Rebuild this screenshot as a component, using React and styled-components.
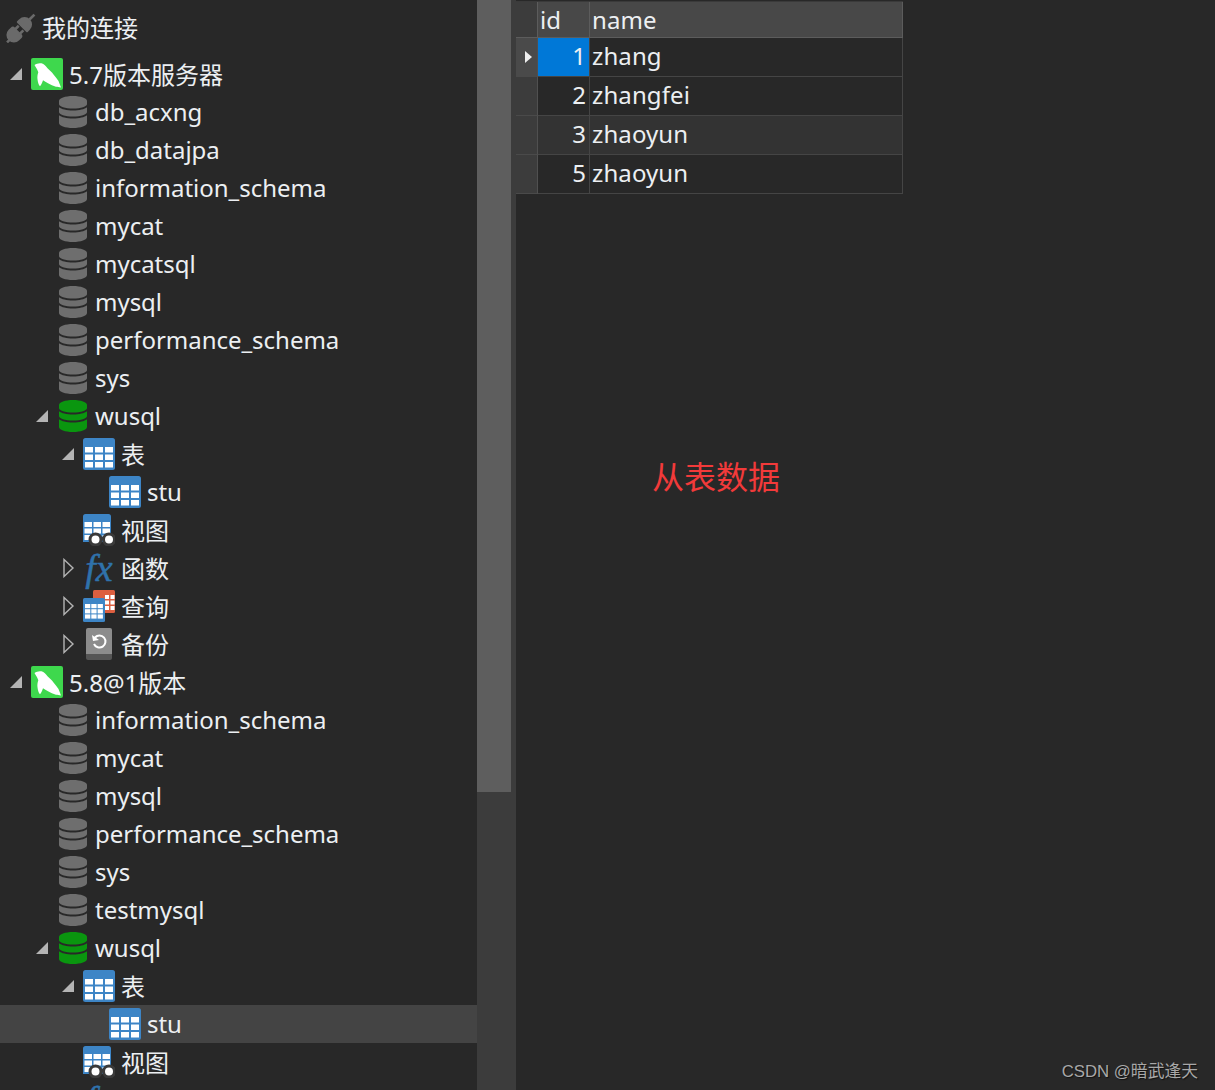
import React from "react";
import styled, { createGlobalStyle } from "styled-components";

const Global = createGlobalStyle`
  html, body { margin: 0; padding: 0; height: 100%; overflow: hidden; background: #282828; }
  #root { height: 100%; }
`;

const FONT = `"Noto Sans", "Noto Sans CJK SC", sans-serif`;

const Page = styled.div`
  display: flex;
  width: 1215px;
  height: 1090px;
  overflow: hidden;
  position: relative;
  background: #282828;
  color: #eceff2;
  font-family: ${FONT};
`;

const Sidebar = styled.div`
  width: 477px;
  flex: none;
  overflow: hidden;
`;

const Header = styled.div`
  height: 55px;
  box-sizing: border-box;
  padding: 8px 0 7px 6px;
  display: flex;
  align-items: center;
  gap: 6px;
  font-size: 24px;
`;

const HeaderLabel = styled.span`
  margin-top: -3px;
`;

const Row = styled.div`
  height: 38px;
  display: flex;
  align-items: center;
  padding-left: ${({ $level }) => $level * 26 + 9}px;
  background: ${({ $selected }) => ($selected ? "#444444" : "transparent")};
  font-size: 24px;
  white-space: nowrap;
`;

const Label = styled.span`
  margin-top: -2px;
  letter-spacing: ${({ $latin }) => ($latin ? "-0.02px" : "0")};
`;

const CaretSlot = styled.span`
  width: 22px;
  height: 38px;
  flex: none;
  display: flex;
  align-items: center;
`;

const IconSlot = styled.span`
  width: 32px;
  height: 38px;
  flex: none;
  display: flex;
  align-items: center;
  justify-content: center;
  margin-right: 6px;
`;

const FxGlyph = styled.span`
  font-family: "Liberation Serif", serif;
  font-style: italic;
  font-weight: 400;
  font-size: 38px;
  line-height: 32px;
  color: #2f72ab;
  -webkit-text-stroke: 0.5px #2f72ab;
`;

const Scroll = styled.div`
  width: 39px;
  flex: none;
  background: #3c3c3c;
`;

const Thumb = styled.div`
  width: 34px;
  height: 792px;
  background: #5e5e5e;
`;

const Main = styled.div`
  flex: 1;
  min-width: 0;
  padding-top: 1px;
`;

const Grid = styled.div`
  width: 387px;
  border-top: 1px solid #3a3a3a;
  display: grid;
  grid-template-columns: 22px 52px 313px;
  grid-template-rows: 36px repeat(4, 39px);
  font-size: 24px;
  letter-spacing: 0.1px;
`;

const HeadCell = styled.div`
  box-sizing: border-box;
  padding: 0 0 0 ${({ $pad }) => $pad || 0}px;
  display: flex;
  align-items: center;
  background: ${({ $blank }) => ($blank ? "#3c3c3c" : "#484848")};
  border-right: 1px solid #5c5c5c;
  border-bottom: 1px solid #5c5c5c;
`;

const Marker = styled.div`
  background: ${({ $active }) => ($active ? "#4a4a4a" : "#3c3c3c")};
  border-right: 1px solid #505050;
  border-bottom: 1px solid #4a4a4a;
  display: flex;
  align-items: center;
  justify-content: flex-end;
  padding-right: 5px;
  box-sizing: border-box;
`;

const Cell = styled.div`
  box-sizing: border-box;
  display: flex;
  align-items: center;
  justify-content: ${({ $num }) => ($num ? "flex-end" : "flex-start")};
  padding: ${({ $num }) => ($num ? "0 3px 4px 0" : "0 0 4px 2px")};
  background: ${({ $active, $alt }) => ($active ? "#0078d7" : $alt ? "#333333" : "#282828")};
  border-right: 1px solid #454545;
  border-bottom: 1px solid #454545;
`;

const Note = styled.div`
  margin: 261px 0 0 136px;
  color: #f23a3a;
  font-size: 32px;
  line-height: 40px;
  font-family: "Noto Sans CJK SC", sans-serif;
`;

const Watermark = styled.div`
  position: absolute;
  right: 17px;
  bottom: 8px;
  color: #a8a8a8;
  font-size: 16.8px;
  font-family: "Liberation Sans", "Noto Sans CJK SC", sans-serif;
  text-shadow: 1px 1px 1px #111;
`;

const Caret = ({ open }) =>
  open ? (
    <svg width="14" height="14" viewBox="0 0 14 14"><path d="M13 1v12H1z" fill="#b4b4b4" /></svg>
  ) : (
    <svg width="14" height="20" viewBox="0 0 14 20"><path d="M3 1.500 12 10 3 18.500z" fill="none" stroke="#b4b4b4" strokeWidth="1.400" /></svg>
  );

const Plug = () => (
  <svg width="30" height="30" viewBox="0 0 30 30">
    <g fill="#6a6a6a" transform="rotate(-45 15 15)">
      <path d="M3 8h3a3 3 0 0 1 3 3v9a3 3 0 0 1-3 3H3a7.500 7.500 0 0 1 0-15z" transform="translate(2 -.5)" />
      <rect x="-5" y="14" width="6" height="2.600" />
      <rect x="10" y="10.500" width="5" height="2.600" />
      <rect x="10" y="17" width="5" height="2.600" />
      <path d="M17 7.500h3a7.500 7.500 0 0 1 0 15h-3a1 1 0 0 1-1-1v-13a1 1 0 0 1 1-1z" />
      <rect x="27" y="13.700" width="7" height="2.600" />
    </g>
  </svg>
);

const Dolphin = () => (
  <svg width="32" height="32" viewBox="0 0 32 32">
    <rect width="32" height="32" rx="2" fill="#3ed84d" />
    <path
      d="M3.500 7C5.500 5.500 8 4.800 10.500 5.300c2.500.8 4.500 3 6 5 2 2.200 4.500 4 6 6.200 1.800 2.200 3.500 4.300 5 6.500l2.500 6.500c-2-.2-3.500-.8-5-.8-2.700-.8-5.500-2.200-8-3.500-1.800-1-3.500-1.800-5-3-.8 2.200-1.500 4.500-3 6-1.500-1.500-2.200-4.500-2.500-7-.3-2.500 0-4.800.8-7C6 10.500 4.500 9 3.500 7z"
      fill="#ffffff"
    />
  </svg>
);

const Database = ({ color }) => (
  <svg width="28" height="32" viewBox="0 0 28 32">
    <path d="M0 5c0-2.800 6-5 14-5s14 2.200 14 5v3c0 2.500-6 4.500-14 4.500S0 10.500 0 8z" fill={color} />
    <path d="M0 11.300c2.500 2 7.500 3.200 14 3.200s11.500-1.200 14-3.200V16c0 2.500-6 4.500-14 4.500S0 18.500 0 16z" fill={color} />
    <path d="M0 19.300c2.500 2 7.500 3.200 14 3.200s11.500-1.200 14-3.200V27c0 2.800-6 5-14 5S0 29.800 0 27z" fill={color} />
  </svg>
);

const cells = (x0, y0, w, h, cols, rows, gap, fill) => {
  const out = [];
  for (let r = 0; r < rows; r++) {
    for (let c = 0; c < cols; c++) {
      out.push(<rect key={`${r}-${c}`} x={x0 + c * (w + gap)} y={y0 + r * (h + gap)} width={w} height={h} fill={fill} />);
    }
  }
  return out;
};

const TableIcon = () => (
  <svg width="32" height="32" viewBox="0 0 32 32">
    <rect width="32" height="32" rx="2.500" fill="#3d85c6" />
    {cells(2, 9, 8, 5.500, 3, 3, 2, "#ffffff")}
  </svg>
);

const ViewIcon = () => (
  <svg width="32" height="32" viewBox="0 0 32 32">
    <path d="M0 2.500A2.500 2.500 0 0 1 2.500 0h23A2.500 2.500 0 0 1 28 2.500V28H0z" fill="#3d85c6" />
    {cells(1.500, 8, 7.500, 5, 3, 3, 1.500, "#ffffff")}
    <g fill="#ffffff" stroke="#3a3a3a" strokeWidth="3">
      <circle cx="12.500" cy="25.500" r="5.500" />
      <circle cx="26" cy="25.500" r="5.500" />
    </g>
    <rect x="17" y="23" width="5" height="3" fill="#3a3a3a" />
  </svg>
);

const QueryIcon = () => (
  <svg width="32" height="32" viewBox="0 0 32 32">
    <rect x="10" y="0" width="22" height="23" rx="1.500" fill="#dd5f40" />
    {cells(22, 5, 4, 4, 2, 3, 1.500, "#ffffff")}
    <rect x="0" y="8" width="22" height="24" rx="1.500" fill="#3d85c6" />
    {cells(2, 14, 5.300, 4.200, 3, 3, 1, "#ffffff")}
  </svg>
);

const BackupIcon = () => (
  <svg width="26" height="32" viewBox="0 0 26 32">
    <path d="M0 2a2 2 0 0 1 2-2h22a2 2 0 0 1 2 2v24H0z" fill="#8c8c8c" />
    <path d="M0 26h26v4a2 2 0 0 1-2 2H2a2 2 0 0 1-2-2z" fill="#555555" />
    <path d="M9 9.500a6 6 0 1 1-1 6.500" fill="none" stroke="#ffffff" strokeWidth="2" />
    <path d="M6 7l1 6 6-1z" fill="#ffffff" />
  </svg>
);

const DB = "#6e6e6e";
const GREEN = "#0a960f";

const fx = <FxGlyph>fx</FxGlyph>;

const rows = [
  { level: 0, caret: "open", icon: <Dolphin />, text: "5.7版本服务器" },
  ...["db_acxng", "db_datajpa", "information_schema", "mycat", "mycatsql", "mysql", "performance_schema", "sys"].map((text) => ({ level: 1, db: DB, text })),
  { level: 1, caret: "open", db: GREEN, text: "wusql" },
  { level: 2, caret: "open", icon: <TableIcon />, text: "表" },
  { level: 3, icon: <TableIcon />, text: "stu" },
  { level: 2, icon: <ViewIcon />, text: "视图" },
  { level: 2, caret: "closed", icon: fx, text: "函数" },
  { level: 2, caret: "closed", icon: <QueryIcon />, text: "查询" },
  { level: 2, caret: "closed", icon: <BackupIcon />, text: "备份" },
  { level: 0, caret: "open", icon: <Dolphin />, text: "5.8@1版本" },
  ...["information_schema", "mycat", "mysql", "performance_schema", "sys", "testmysql"].map((text) => ({ level: 1, db: DB, text })),
  { level: 1, caret: "open", db: GREEN, text: "wusql" },
  { level: 2, caret: "open", icon: <TableIcon />, text: "表" },
  { level: 3, icon: <TableIcon />, selected: true, text: "stu" },
  { level: 2, icon: <ViewIcon />, text: "视图" },
  // only the top of the icon shows at the bottom edge, the label is below the fold
  { level: 2, icon: fx },
];

const records = [
  { id: 1, name: "zhang" },
  { id: 2, name: "zhangfei" },
  { id: 3, name: "zhaoyun" },
  { id: 5, name: "zhaoyun" },
];

export default function App() {
  return (
    <Page>
      <Global />
      <Sidebar>
        <Header>
          <Plug />
          <HeaderLabel>我的连接</HeaderLabel>
        </Header>
        {rows.map((r, i) => (
          <Row key={i} $level={r.level} $selected={r.selected}>
            <CaretSlot>{r.caret && <Caret open={r.caret === "open"} />}</CaretSlot>
            <IconSlot>{r.db ? <Database color={r.db} /> : r.icon}</IconSlot>
            {r.text && <Label $latin={/^[a-z_]+$/.test(r.text)}>{r.text}</Label>}
          </Row>
        ))}
      </Sidebar>
      <Scroll>
        <Thumb />
      </Scroll>
      <Main>
        <Grid>
          <HeadCell $blank />
          <HeadCell $pad={2}>id</HeadCell>
          <HeadCell $pad={2}>name</HeadCell>
          {records.map((rec, i) => (
            <React.Fragment key={rec.id}>
              <Marker $active={i === 0}>
                {i === 0 && (
                  <svg width="7" height="12" viewBox="0 0 7 12"><path d="M0 0l7 6-7 6z" fill="#eeeeee" /></svg>
                )}
              </Marker>
              <Cell $num $active={i === 0} $alt={i === 2}>{rec.id}</Cell>
              <Cell $alt={i === 2}>{rec.name}</Cell>
            </React.Fragment>
          ))}
        </Grid>
        <Note>从表数据</Note>
      </Main>
      <Watermark>CSDN @暗武逢天</Watermark>
    </Page>
  );
}
